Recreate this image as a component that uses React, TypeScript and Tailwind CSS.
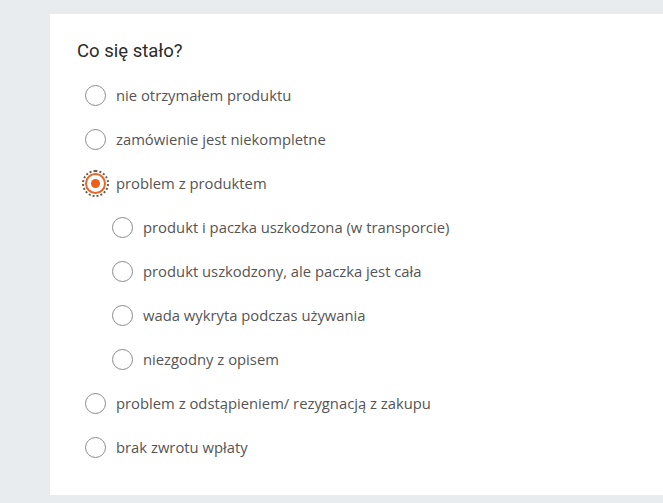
import { useState } from 'react'

interface Option {
  id: string
  label: string
  children?: Option[]
}

const options: Option[] = [
  { id: 'missing', label: 'nie otrzymałem produktu' },
  { id: 'incomplete', label: 'zamówienie jest niekompletne' },
  {
    id: 'problem',
    label: 'problem z produktem',
    children: [
      { id: 'transport', label: 'produkt i paczka uszkodzona (w transporcie)' },
      { id: 'damaged', label: 'produkt uszkodzony, ale paczka jest cała' },
      { id: 'defect', label: 'wada wykryta podczas używania' },
      { id: 'mismatch', label: 'niezgodny z opisem' },
    ],
  },
  { id: 'withdraw', label: 'problem z odstąpieniem/ rezygnacją z zakupu' },
  { id: 'refund', label: 'brak zwrotu wpłaty' },
]

function Radio(props: { checked: boolean; focused?: boolean }) {
  const { checked, focused } = props
  return (
    <span className="relative flex h-[21px] w-[21px] flex-shrink-0 items-center justify-center">
      {focused && (
        <span className="absolute -inset-[3px] rounded-full border-2 border-dotted border-[#6b5a40]" />
      )}
      <span
        className={
          checked
            ? 'flex h-[21px] w-[21px] items-center justify-center rounded-full border-2 border-[#e0672e] bg-white'
            : 'h-[21px] w-[21px] rounded-full border border-[#8c8c8c] bg-white'
        }
      >
        {checked && <span className="h-[9px] w-[9px] rounded-full bg-[#f25c19]" />}
      </span>
    </span>
  )
}

function Row(props: { opt: Option; selected: string; onSelect: (id: string) => void }) {
  const { opt, selected, onSelect } = props
  const on = selected === opt.id
  return (
    <label className="flex h-[44px] cursor-pointer items-center gap-[10px]" onClick={() => onSelect(opt.id)}>
      <Radio checked={on} focused={on} />
      <span className="text-[14.8px] text-[#555]">{opt.label}</span>
    </label>
  )
}

export default function App() {
  const [selected, setSelected] = useState('problem')
  const [sub, setSub] = useState('')

  return (
    <div
      className="h-[503px] w-[663px] overflow-hidden bg-[#e9ecef] pl-[50px] pt-[14px]"
      style={{ fontFamily: '"Open Sans", "Liberation Sans", sans-serif' }}
    >
      <div className="h-[481px] bg-white pl-[27px] pt-[26px]">
        <h2 className="mb-[11px] text-[18.5px] font-normal leading-[22px] text-[#2b2b2b]" style={{ fontFamily: 'Roboto, "Liberation Sans", sans-serif' }}>
          Co się stało?
        </h2>
        <div className="flex flex-col pl-[8px]">
          {options.map(o => (
            <div key={o.id}>
              <Row opt={o} selected={selected} onSelect={setSelected} />
              {o.children && selected === o.id && (
                <div className="flex flex-col pl-[27px]">
                  {o.children.map(c => (
                    <Row key={c.id} opt={c} selected={sub} onSelect={setSub} />
                  ))}
                </div>
              )}
            </div>
          ))}
        </div>
      </div>
    </div>
  )
}
